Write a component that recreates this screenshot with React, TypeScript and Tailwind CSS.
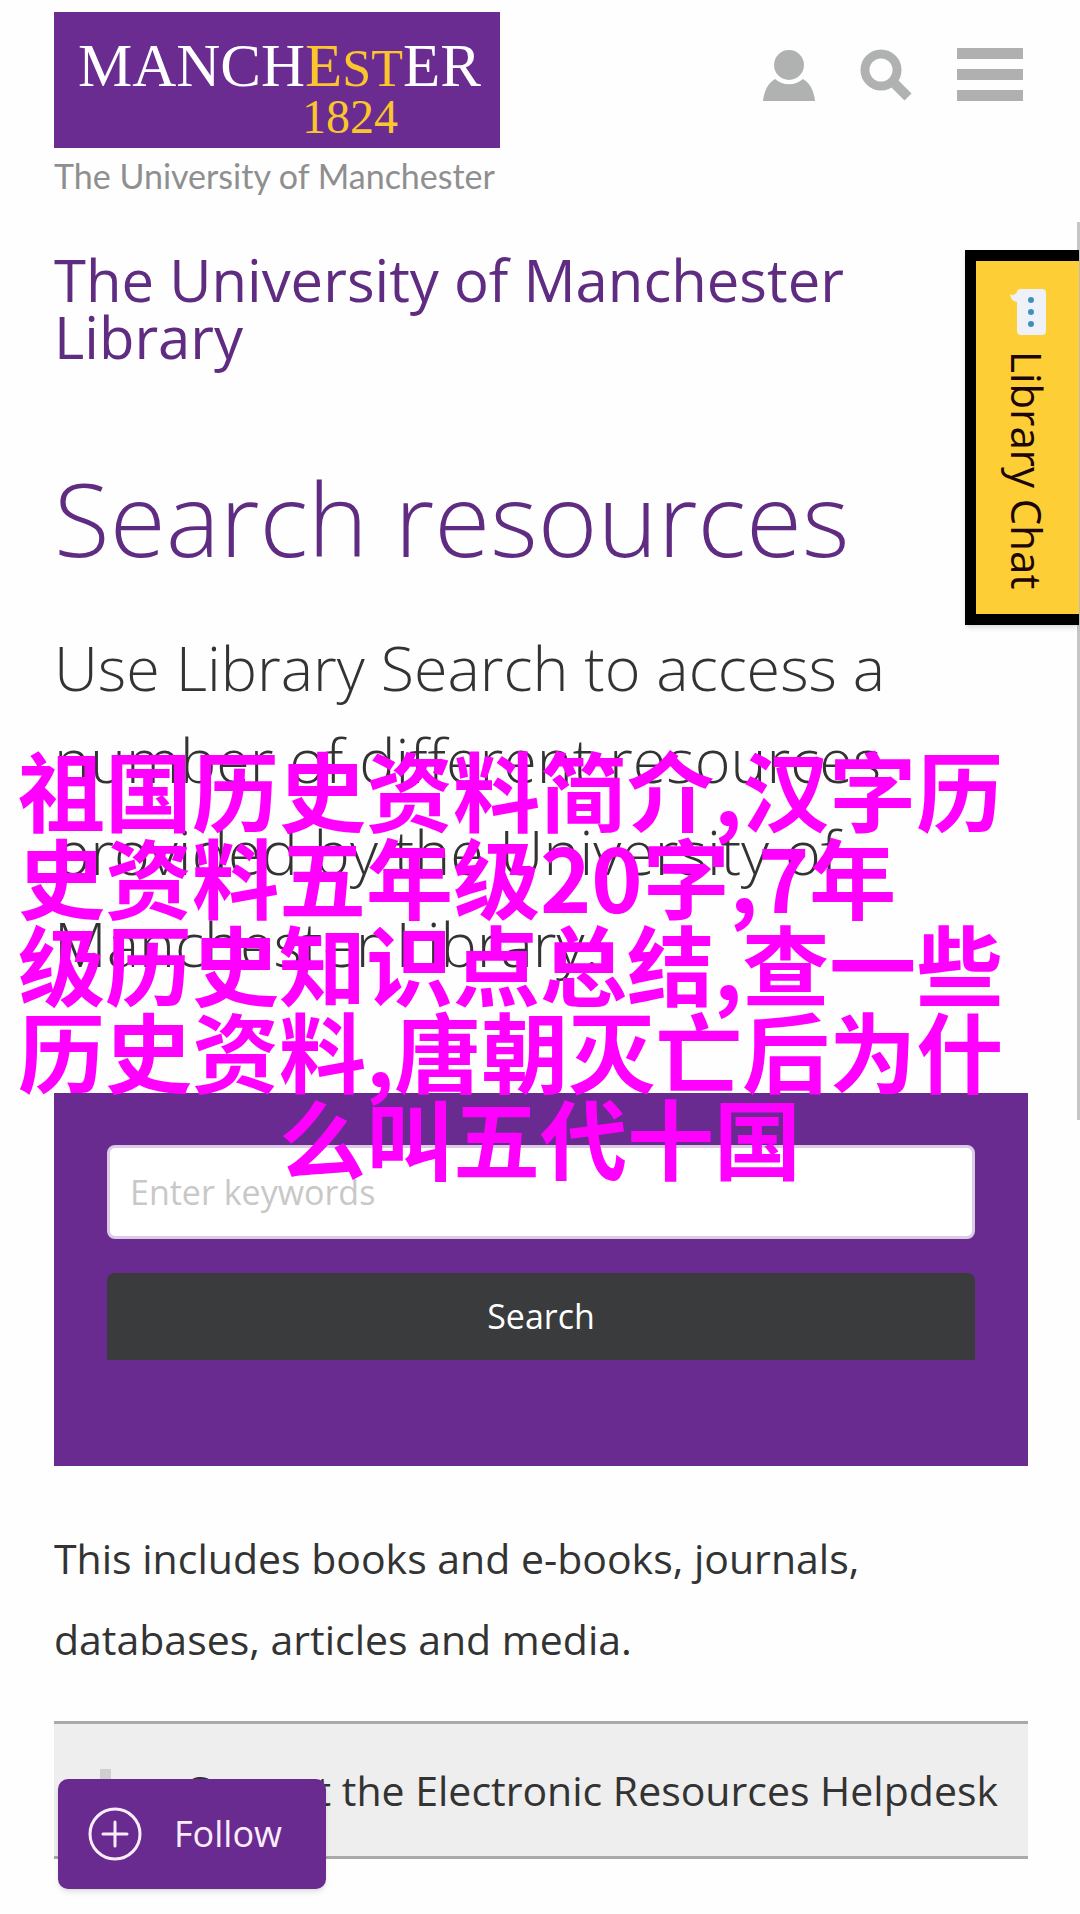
import React from 'react';

const captionLines = [
  '祖国历史资料简介,汉字历',
  '史资料五年级20字,7年',
  '级历史知识点总结,查一些',
  '历史资料,唐朝灭亡后为什',
];

function UserIcon() {
  return (
    <svg viewBox="0 0 52 52" className="h-[52px] w-[52px]" fill="#b0b2b2" aria-hidden="true">
      <circle cx="26" cy="16" r="15" />
      <path d="M12 30C5 34 1 42 0 52h52c-1-10-5-18-12-22-8 7-20 7-28 0z" />
    </svg>
  );
}

function SearchIcon() {
  return (
    <svg viewBox="0 0 52 52" className="h-[52px] w-[52px]" fill="none" stroke="#b0b2b2" aria-hidden="true">
      <circle cx="21" cy="21" r="16" strokeWidth="9" />
      <path d="M32 32l16 16" strokeWidth="10" />
    </svg>
  );
}

function MenuIcon() {
  return (
    <svg viewBox="0 0 66 53" className="h-[53px] w-[66px]" fill="#b0b0b0" aria-hidden="true">
      <path d="M0 0h66v11H0zM0 21h66v11H0zM0 42h66v11H0z" />
    </svg>
  );
}

function ChatIcon() {
  return (
    <svg viewBox="0 0 36 46" className="h-[46px] w-9" aria-hidden="true">
      <path d="M7 3Q7 0 11 0h21q4 0 4 4v38q0 4-4 4H11q-4 0-4-4V13Q1 12 0 5q4 3 7-2z" fill="#eef2f8" />
      <g fill="#3f8fc0">
        <circle cx="21" cy="11" r="3" />
        <circle cx="21" cy="23" r="3" />
        <circle cx="21" cy="35" r="3" />
      </g>
    </svg>
  );
}

function Logo() {
  return (
    <a href="#" className="block w-[446px]">
      <span className="block h-[136px] bg-[#6b2c91] pt-6 pl-6 font-['Liberation_Serif',serif] text-white">
        <span className="block text-[61px] leading-[60px] whitespace-nowrap">
          MANCH
          <span className="text-[#fbc52d]">
            E<span className="text-[52px]">ST</span>
          </span>
          ER
        </span>
        <span className="block pr-[102px] text-right text-[48px] leading-9 text-[#fbc52d]">1824</span>
      </span>
      <span className="mt-1 block font-[Lato,sans-serif] text-[34px] leading-[48px] whitespace-nowrap text-[#8f8f8f]">
        The University of Manchester
      </span>
    </a>
  );
}

export default function App() {
  return (
    <div className="relative overflow-hidden bg-[#fefefe] pt-3 pr-[52px] pb-[55px] pl-[54px] font-['Open_Sans',sans-serif] text-[#333]">
      <header className="flex items-start justify-between">
        <Logo />
        <nav className="flex gap-[45px] pt-9 pr-[5px]">
          <button type="button" aria-label="Account">
            <UserIcon />
          </button>
          <button type="button" aria-label="Search the site">
            <SearchIcon />
          </button>
          <button type="button" aria-label="Menu">
            <MenuIcon />
          </button>
        </nav>
      </header>

      <main>
        <h2 className="mt-[51px] mr-[100px] text-[58px] leading-[57px] text-[#5f2c82]">
          The University of Manchester Library
        </h2>
        <h1 className="mt-20 text-[102px] leading-[146px] font-light text-[#5f2c82]">Search resources</h1>
        <p className="mt-[31px] mr-[80px] text-[61px] leading-[92px] font-light">
          Use Library Search to access a number of different resources provided by the University of Manchester
          Library.
        </p>

        <form className="mt-[103px] flex flex-col bg-[#6a2b91] px-[53px] pt-[52px] pb-[106px]">
          <input
            type="text"
            aria-label="Keywords"
            placeholder="Enter keywords"
            className="h-[94px] rounded-lg border-[3px] border-[#dccbe4] bg-white px-5 text-[34px] placeholder:text-[#c8c8c8]"
          />
          <button type="button" className="mt-[34px] h-[87px] rounded-t-lg bg-[#393b3d] text-[34px] text-white">
            Search
          </button>
        </form>

        <p className="mt-[52px] text-[41px] leading-[81px]">
          This includes books and e-books, journals, databases, articles and media.
        </p>

        <a
          href="#"
          className="mt-[41px] flex items-center justify-end border-y-[3px] border-[#aaa] bg-[#eee] pr-[30px] text-[41px] leading-[132px] whitespace-nowrap"
        >
          <span className="mr-auto ml-[46px] h-[42px] w-[11px] bg-[#cfcfcf]" />
          Contact the Electronic Resources Helpdesk
        </a>
      </main>

      <div className="absolute top-[222px] right-0 h-[898px] w-[3px] bg-[#c6c6c6]" />

      <button
        type="button"
        className="absolute top-[250px] right-px flex h-[375px] w-[114px] items-center gap-4 border-t-[11px] border-b-[11px] border-l-[11px] border-black bg-[#fdce36] pt-7 text-[42px] text-[#1c0505] shadow-md [writing-mode:vertical-rl]"
      >
        <ChatIcon />
        Library Chat
      </button>

      <button
        type="button"
        className="absolute bottom-[25px] left-[58px] flex h-[110px] w-[268px] items-center gap-8 rounded-[10px] bg-[#6a2b91] pl-[30px] text-[36px] text-[#fbeefc] shadow-md"
      >
        <svg viewBox="0 0 54 54" className="h-[54px] w-[54px]" fill="none" stroke="currentColor" strokeWidth="3" strokeLinecap="round" aria-hidden="true">
          <circle cx="27" cy="27" r="25" />
          <path d="M27 15v24M15 27h24" />
        </svg>
        Follow
      </button>

      <div className="pointer-events-none absolute top-[745px] left-0 w-full px-[18px] font-['Noto_Sans_CJK_SC',sans-serif] text-[87px] leading-[87px] font-bold whitespace-nowrap text-[#ff00ff]">
        {captionLines.map((line) => (
          <p key={line}>{line}</p>
        ))}
        <p className="text-center">么叫五代十国</p>
      </div>
    </div>
  );
}
